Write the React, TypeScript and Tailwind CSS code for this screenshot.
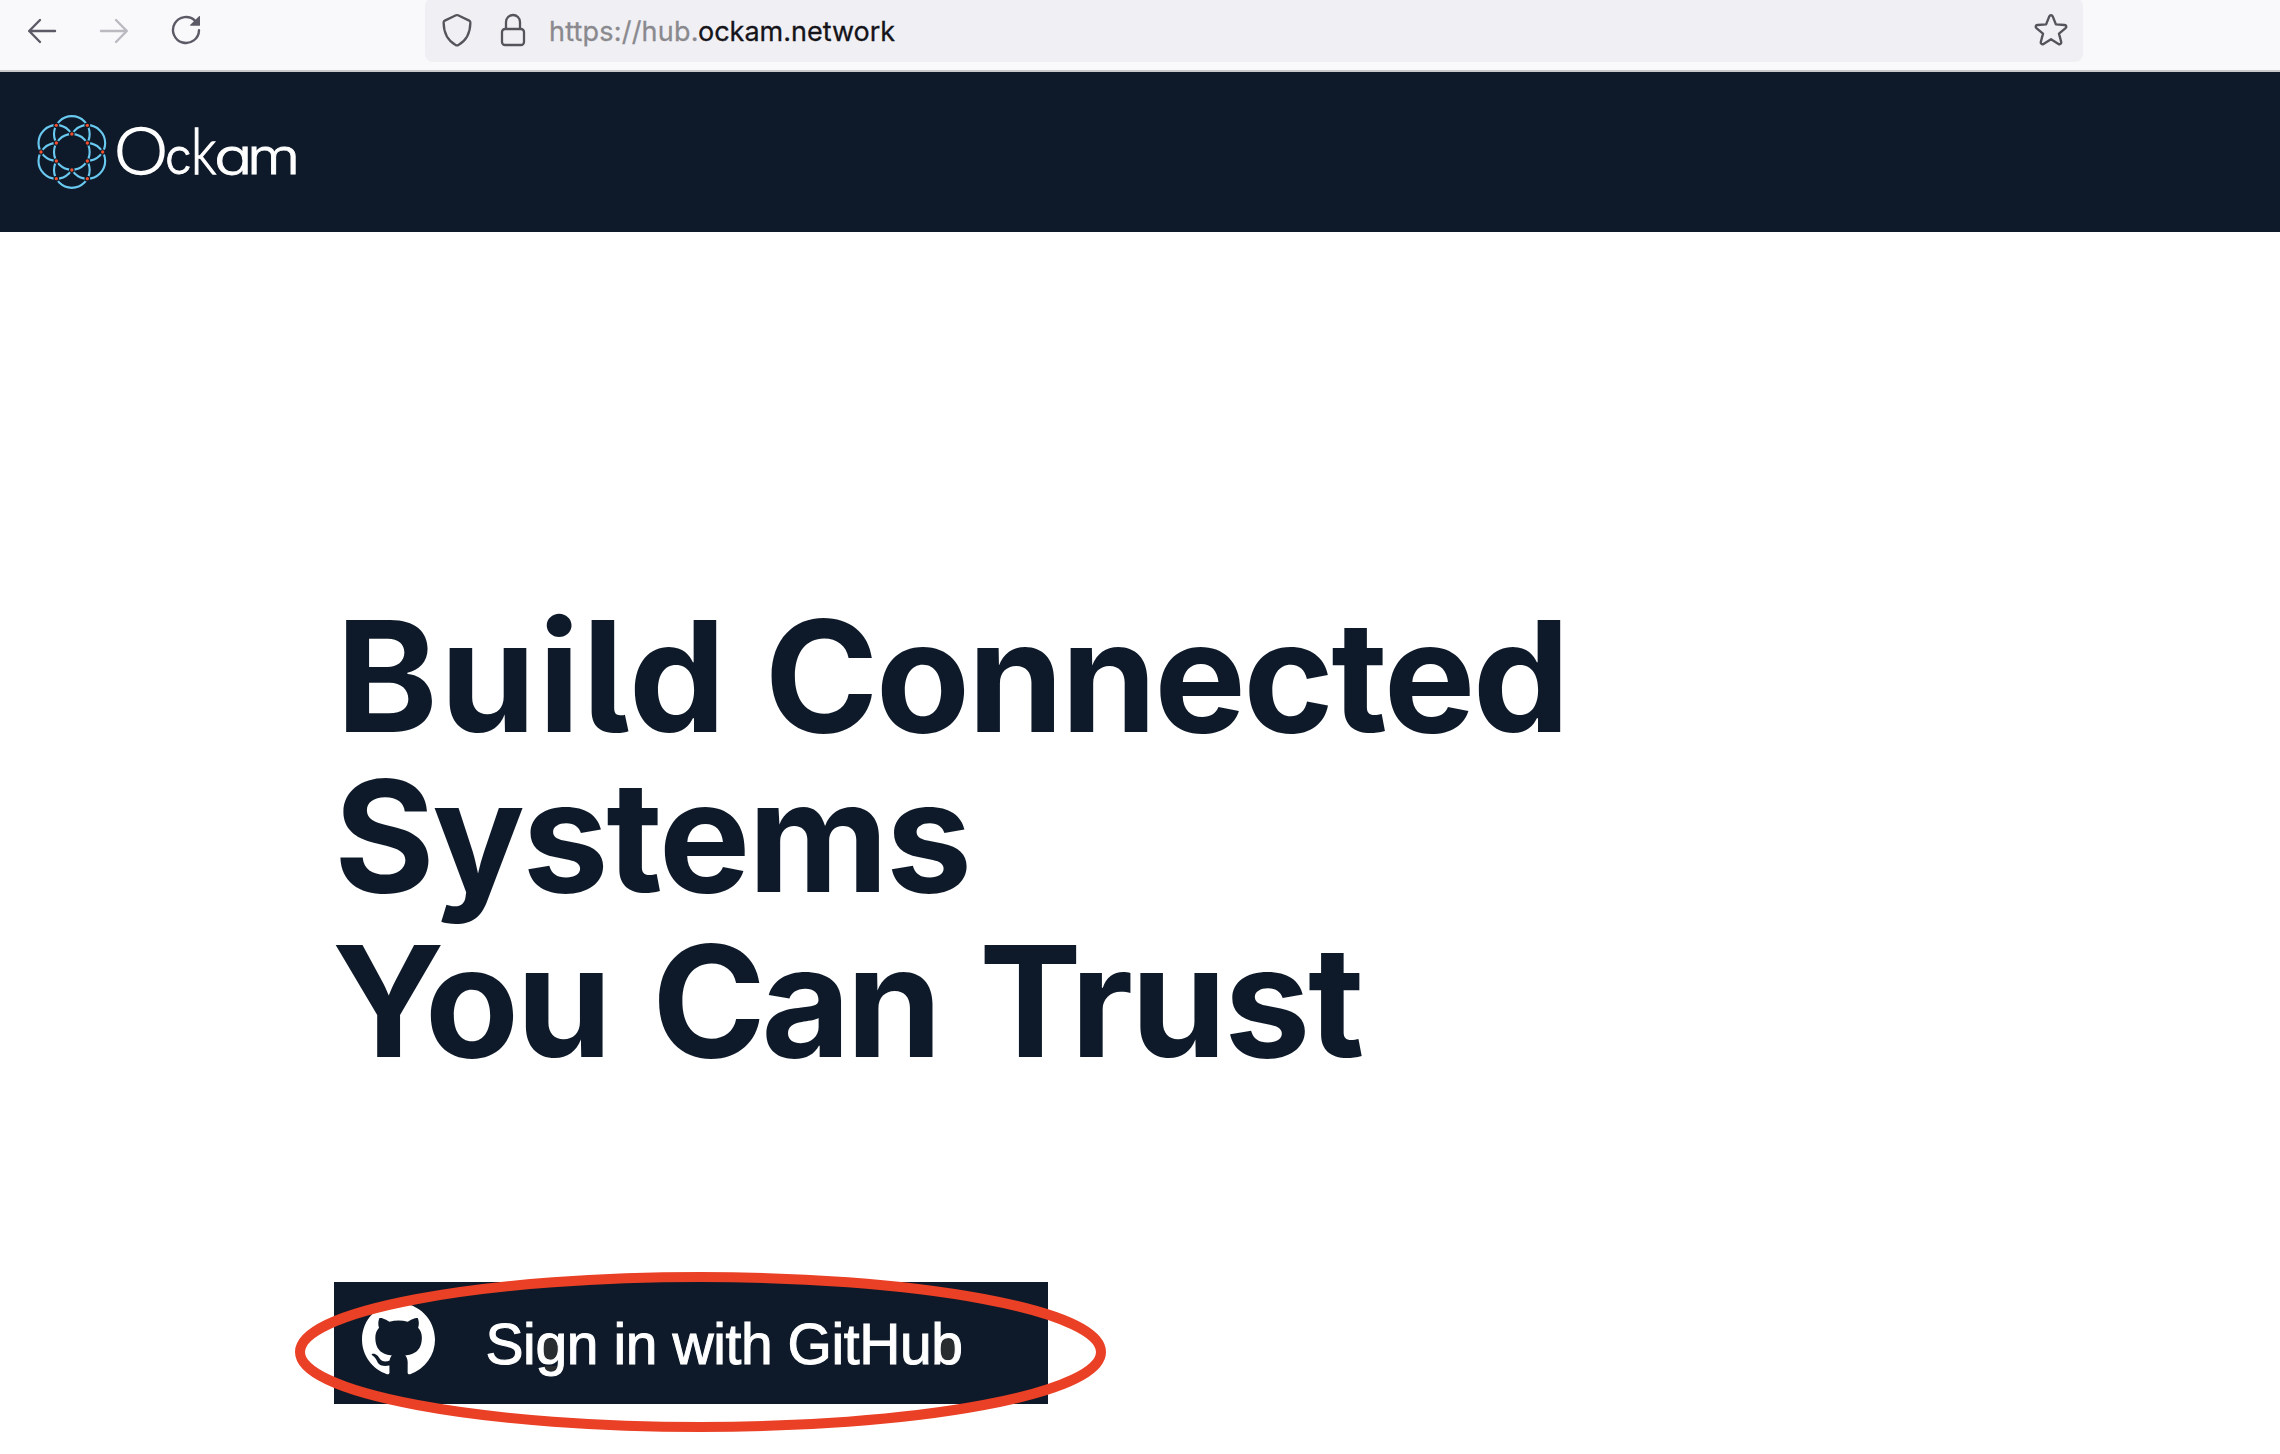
const INK = 'text-[#0e1a29]';

function BackIcon({ className = '' }: { className?: string }) {
  return (
    <svg className={className} width="30" height="30" viewBox="0 0 30 30" fill="none" stroke="currentColor" strokeWidth="2.4" strokeLinecap="round" strokeLinejoin="round">
      <path d="M28 15H2.2M13 4L2.2 15L13 26" />
    </svg>
  );
}

function ReloadIcon() {
  return (
    <svg width="30" height="30" viewBox="0 0 30 30" fill="none">
      <path d="M28 15.2A13 13 0 1 1 24.2 5.8" stroke="#5b5a66" strokeWidth="2.4" strokeLinecap="round" />
      <path d="M29 1.6V10.2a.6 .6 0 0 1-.6 .6H19.8c-.6 0-.9-.7-.5-1.1L28 1.2c.4-.4 1-.1 1 .4z" fill="#5b5a66" />
    </svg>
  );
}

function ShieldIcon() {
  return (
    <svg width="30" height="34" viewBox="0 0 30 34" fill="none" stroke="#55545c" strokeWidth="2.3" strokeLinejoin="round">
      <path d="M14 2.3a2.4 2.4 0 0 1 2 0L27.2 7.6c.8 .4 1.2 1 1.2 1.9C28.2 20 24.5 27.5 16.4 32a2.6 2.6 0 0 1-2.8 0C5.5 27.5 1.8 20 1.6 9.5c0-.9 .4-1.5 1.2-1.9z" />
    </svg>
  );
}

function LockIcon() {
  return (
    <svg width="26" height="34" viewBox="0 0 26 34" fill="none" stroke="#55545c" strokeWidth="2.3">
      <rect x="2" y="16" width="22" height="16" rx="3" />
      <path d="M6 16V9a7 7 0 0 1 14 0V16" />
    </svg>
  );
}

function StarIcon() {
  return (
    <svg width="34" height="34" viewBox="0 0 34 34" fill="none" stroke="#55545c" strokeWidth="2.4" strokeLinejoin="round">
      <path d="M15.3 3.4c.6-1.5 2.8-1.5 3.4 0L21.9 11.4L30.6 12c1.7 .1 2.3 2.1 1 3.1L25 20.600L27.2 29c.4 1.6-1.3 2.8-2.7 1.9L17 26.2L9.5 30.9C8.1 31.8 6.4 30.6 6.8 29L9 20.600L2.4 15.1c-1.3-1-.7-3 1-3.1L12.1 11.4z" />
    </svg>
  );
}

const NODES: [number, number][] = [
  [169, 376], [262, 376], [215.5, 402], [169, 429], [262, 429], [123, 456],
  [308, 456], [169, 483], [262, 483], [215.5, 510], [169, 536], [262, 536],
];
const PETALS: [number, number][] = [
  [215.5, 402], [262, 429], [262, 483], [215.5, 510], [169, 483], [169, 429],
];

function OckamMark() {
  return (
    <svg width="74" height="78" viewBox="105 339 222 234" fill="none">
      <mask id="petals" maskUnits="userSpaceOnUse" x="105" y="339" width="222" height="234">
        <rect x="105" y="339" width="222" height="234" fill="#fff" />
        <circle cx="215.5" cy="456" r="54" fill="#000" />
      </mask>
      <g stroke="#6ac9f0" strokeWidth="6.4">
        <g mask="url(#petals)">
          {PETALS.map(([x, y]) => <circle key={`${x}-${y}`} cx={x} cy={y} r="53.5" />)}
        </g>
        <circle cx="215.5" cy="456" r="53.5" />
      </g>
      {NODES.map(([x, y]) => (
        <g key={`${x}-${y}`}>
          <circle cx={x} cy={y} r="8.5" fill="#0e1a29" />
          <circle cx={x} cy={y} r="5" fill="#f0502f" />
        </g>
      ))}
    </svg>
  );
}

function OckamWordmark() {
  return (
    <div className="-mt-[3px] flex items-baseline font-[Inter] text-[50px] leading-[78px] font-light text-white [-webkit-text-stroke:0.8px_#fff] [font-feature-settings:'cv11']">
      <span className="w-[51px] origin-left scale-x-[1.05] font-[Lato] text-[65px] [-webkit-text-stroke:1.3px_#fff]">O</span>
      <span className="w-[26px] origin-left scale-x-[.96]">c</span>
      <span className="w-[23px] origin-left scale-x-[.84] font-[Lato] text-[63px] [-webkit-text-stroke:1.3px_#fff]">k</span>
      <span className="w-[33px] origin-left scale-x-[1.28]">a</span>
      <span className="w-[50px] origin-left scale-x-[1.22]">m</span>
    </div>
  );
}

function BrowserBar() {
  return (
    <div className="flex h-[72px] items-start border-b-2 border-[#c9c9cb] bg-[#f9f9fb]">
      <div className="flex w-[425px] gap-[42px] pt-4 pl-[27px]">
        <BackIcon className="text-[#5b5a66]" />
        <BackIcon className="rotate-180 text-[#bbbac0]" />
        <div className="-mt-px"><ReloadIcon /></div>
      </div>
      <div className="-mt-0.5 flex h-16 w-[1658px] items-center rounded-lg bg-[#f0f0f4] pl-[17px]">
        <ShieldIcon />
        <div className="ml-[28px]"><LockIcon /></div>
        <div className="mt-[3px] ml-[23px] flex font-[Inter] text-[27px] leading-8 whitespace-pre text-[#15141a] [-webkit-text-stroke:0.3px_currentColor]">
          <span className="w-[149px] tracking-[0.2px] text-[#8a898e]">https://hub.</span>
          <span>ockam.network</span>
        </div>
        <div className="mr-[15px] ml-auto"><StarIcon /></div>
      </div>
    </div>
  );
}

function Headline() {
  return (
    <h1 className={`font-[Inter] text-[154px] leading-[160px] font-bold [font-feature-settings:'cv05'] ${INK}`}>
      <div className="flex h-[160px] pl-[4px]">
        <span className="w-[428.5px] tracking-[2.2px]">Build</span>
        <span className="tracking-[-2.6px]">Connected</span>
      </div>
      <div className="flex h-[165px] pl-[2px]">
        <span className="tracking-[-2.5px]">Systems</span>
      </div>
      <div className="flex h-[160px]">
        <span className="w-[320px] tracking-[-3px]">You</span>
        <span className="w-[327px] tracking-[-4.6px]">Can</span>
        <span className="tracking-[-2.5px]">Trust</span>
      </div>
    </h1>
  );
}

function GitHubMark() {
  return (
    <svg width="73" height="73" viewBox="0 0 16 16" fill="#fff">
      <path d="M8 0C3.58 0 0 3.58 0 8c0 3.54 2.29 6.53 5.47 7.59.4.07.55-.17.55-.38 0-.19-.01-.82-.01-1.49-2.01.37-2.53-.49-2.69-.94-.09-.23-.48-.94-.82-1.13-.28-.15-.68-.52-.01-.53.63-.01 1.08.58 1.23.82.72 1.21 1.87.87 2.33.66.07-.52.28-.87.51-1.07-1.78-.2-3.64-.89-3.64-3.95 0-.87.31-1.59.82-2.15-.08-.2-.36-1.02.08-2.12 0 0 .67-.21 2.2.82.64-.18 1.32-.27 2-.27s1.36.09 2 .27c1.53-1.04 2.2-.82 2.2-.82.44 1.1.16 1.92.08 2.12.51.56.82 1.27.82 2.15 0 3.07-1.87 3.75-3.65 3.95.25.22.54.73.54 1.48 0 1.07-.01 1.93-.01 2.2 0 .21.15.46.55.38A8.01 8.01 0 0 0 16 8c0-4.42-3.58-8-8-8z" />
    </svg>
  );
}

function SignInButton() {
  return (
    <div className="relative w-[714px]">
      <button className="relative flex h-[122px] w-[714px] items-start bg-[#0e1a29] pt-[21px] pl-[27.5px]">
        <span className="absolute top-[56px] left-[209px] h-[25px] w-[16px] rounded-full bg-[#2a2d30]" />
        <span className="absolute top-[84px] left-[210px] h-[5px] w-[14px] bg-[#2a2d30]" />
        <span className="absolute top-[56px] left-[605px] h-[25px] w-[16px] rounded-full bg-[#2a2d30]" />
        <GitHubMark />
        <span className="relative mt-[9px] ml-[51px] font-['Liberation_Sans'] text-[57px] leading-[64px] tracking-[-0.4px] whitespace-pre text-white [-webkit-text-stroke:1px_#fff]">
          Sign in with GitHub
        </span>
      </button>
      <svg className="absolute top-[-12px] left-[-41px]" width="815" height="164" viewBox="0 0 815 164" fill="none">
        <ellipse cx="407.5" cy="82" rx="400.5" ry="75" stroke="#ea4025" strokeWidth="10" />
      </svg>
    </div>
  );
}

export default function App() {
  return (
    <div className="h-[1454px] w-[2280px] overflow-hidden bg-white">
      <BrowserBar />
      <header className="flex h-[160px] items-start bg-[#0e1a29] pt-[41px] pl-[35px]">
        <OckamMark />
        <div className="ml-[5px]"><OckamWordmark /></div>
      </header>
      <main className="pt-[364px] pl-[332px]">
        <Headline />
        <div className="mt-[201px] ml-[2px]"><SignInButton /></div>
      </main>
    </div>
  );
}
